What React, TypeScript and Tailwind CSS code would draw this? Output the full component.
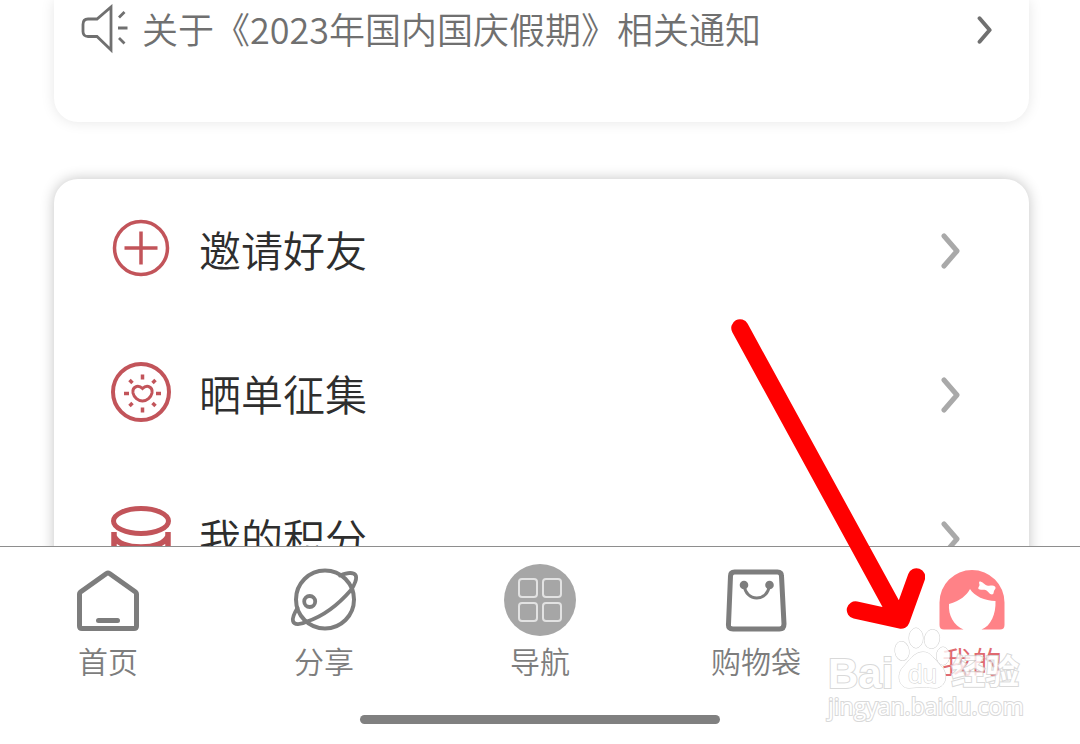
import type { ReactNode } from "react"
import { clsx } from "clsx"

interface MenuItem {
    id: string
    label: string
    icon: ReactNode
}

interface TabItem extends MenuItem {
    active?: boolean
}

const SpeakerIcon = () => (
    <svg
        viewBox="0 0 50 52"
        className="h-[52px] w-[50px] shrink-0"
        fill="none"
        stroke="currentColor"
        strokeWidth="2.8"
        aria-hidden="true"
    >
        <path d="M31 3v43L17 32.500H8c-3.500 0-5-2-5-5v-7c0-3.500 1.500-5.500 5-5.500h9L31 3z" />
        <path d="M39 13.500l5.500-5.500M38 24h9.500M39 34l5.500 5.500" />
    </svg>
)

const ChevronIcon = ({ className }: { className: string }) => (
    <svg
        viewBox="0 0 20 36"
        className={clsx("shrink-0", className)}
        fill="none"
        stroke="currentColor"
        strokeWidth="5"
        strokeLinecap="round"
        strokeLinejoin="round"
        aria-hidden="true"
    >
        <path d="M3 3l13 15L3 33" />
    </svg>
)

const MenuIcon = ({ children }: { children: ReactNode }) => (
    <svg
        viewBox="0 0 60 66"
        className="h-[66px] w-[60px] shrink-0 text-[#c2545a]"
        fill="none"
        stroke="currentColor"
        aria-hidden="true"
    >
        {children}
    </svg>
)

const TabIcon = ({ children }: { children: ReactNode }) => (
    <svg
        viewBox="0 0 72 72"
        className="size-[72px]"
        fill="none"
        stroke="currentColor"
        strokeLinecap="round"
        strokeLinejoin="round"
        aria-hidden="true"
    >
        {children}
    </svg>
)

const menuItems: MenuItem[] = [
    {
        id: "invite",
        label: "邀请好友",
        icon: (
            <MenuIcon>
                <circle cx="30" cy="30" r="26.500" strokeWidth="3.500" />
                <path d="M30 13.500v33M13.500 30h33" strokeWidth="3.500" />
            </MenuIcon>
        ),
    },
    {
        id: "share-order",
        label: "晒单征集",
        icon: (
            <MenuIcon>
                <circle cx="30" cy="30" r="28" strokeWidth="4" />
                <path
                    d="M31.500 26.500c-2-2-4-2.500-6-2-3 1-4 3.500-3.500 6.500 1 4.500 5 8 9.500 8s8.500-3.500 9.500-8c.5-3-.5-5.500-3.500-6.500-2-.5-4 0-6 2z"
                    strokeWidth="3"
                />
                <path
                    d="M31.500 12.500v5M31.500 45.500v5M13 31.500h5M45 31.500h5M18.500 18l3 3M44.500 18l-3 3M18.500 44l3-3M44.500 44l-3-3"
                    strokeWidth="3.500"
                />
            </MenuIcon>
        ),
    },
    {
        id: "points",
        label: "我的积分",
        icon: (
            <MenuIcon>
                <ellipse cx="30" cy="15" rx="27.500" ry="12.500" strokeWidth="5" />
                <path
                    d="M3 26v20M57 26v20M3 30c3 7.500 14 11 27 11s24-3.500 27-11M3 45c3 7.500 14 11 27 11s24-3.500 27-11"
                    strokeWidth="5.500"
                />
            </MenuIcon>
        ),
    },
]

const tabItems: TabItem[] = [
    {
        id: "home",
        label: "首页",
        icon: (
            <TabIcon>
                <path
                    d="M34.500 9.500q1.500-1 3 0L63.500 28q1 1 1 2v32q0 2.500-2.500 2.500H10q-2.500 0-2.500-2.500V30q0-1 1-2z"
                    strokeWidth="5"
                />
                <path d="M26.500 56.500h19" strokeWidth="5" />
            </TabIcon>
        ),
    },
    {
        id: "share",
        label: "分享",
        icon: (
            <TabIcon>
                <circle cx="37" cy="35.500" r="29" strokeWidth="4" />
                <circle cx="21.700" cy="37.500" r="5.500" strokeWidth="3.800" />
                <path
                    d="M52 11.500C58 9 65 8 67.500 11c2 3-1 10-4.500 15C50 41 36 52 19 57.500 12 61 6 61 5 57c-1-4 2-9 4.500-13"
                    strokeWidth="3.800"
                />
            </TabIcon>
        ),
    },
    {
        id: "guide",
        label: "导航",
        icon: (
            <TabIcon>
                <circle cx="36" cy="36" r="36" fill="#a6a6a6" stroke="none" />
                <g stroke="#e2e2e2" strokeWidth="2">
                    <rect x="15" y="15" width="18" height="18" rx="3" />
                    <rect x="39" y="15" width="18" height="18" rx="3" />
                    <rect x="15" y="39" width="18" height="18" rx="3" />
                    <rect x="39" y="39" width="18" height="18" rx="3" />
                </g>
            </TabIcon>
        ),
    },
    {
        id: "bag",
        label: "购物袋",
        icon: (
            <TabIcon>
                <path
                    d="M14.500 8h43q4 0 4 4l2.500 48q0 5-4.500 5H13q-5 0-4.500-5L10.500 12q0-4 4-4z"
                    strokeWidth="5"
                />
                <path d="M24 21c1 8 6 13 12.800 13S48.500 29 49.500 21" strokeWidth="3" />
                <g fill="currentColor" stroke="none">
                    <circle cx="24" cy="21" r="4.300" />
                    <circle cx="49.500" cy="21" r="4.300" />
                </g>
            </TabIcon>
        ),
    },
    {
        id: "mine",
        label: "我的",
        active: true,
        icon: (
            <TabIcon>
                <g stroke="none">
                    <path
                        d="M3.500 38.500a32.500 32.500 0 0 1 65 0V61q0 4.500-4.500 4.500H45.500C55 62 60 50 59.500 37 49 37 38 32 34 25c-3 6-10 12-21 15-1 11 5 22 14.500 25.500H8q-4.500 0-4.500-4.500z"
                        fill="#ff8287"
                    />
                    <path
                        d="M43.500 17.500c3 0 4 2.500 7.500 4 3 1 5.500-1 8 1 1.500 2-.5 3-1 4.500s0 3-2 3.500c-2.500 0-3.500-3-6.500-4.500-2.500-1-5 .5-7-1-1-1.500 1-2.500 1-4 0-1-1-2.500 0-3.500z"
                        fill="#fff"
                    />
                </g>
            </TabIcon>
        ),
    },
]

const NoticeCard = () => (
    <section className="rounded-b-[24px] bg-white pb-[62px] shadow-[0_0_14px_rgba(0,0,0,0.1)]">
        <a
            href="#notice"
            className="flex h-[60px] items-center gap-3 pr-[36px] pl-[26px] text-[#707070]"
        >
            <SpeakerIcon />
            <span className="flex-1 pb-1 text-[36px] leading-[56px] whitespace-nowrap">
                关于《2023年国内国庆假期》相关通知
            </span>
            <ChevronIcon className="h-[28px] w-[16px]" />
        </a>
    </section>
)

const MenuCard = () => (
    <section className="rounded-[24px] bg-white shadow-[0_0_14px_rgba(0,0,0,0.24)]">
        <ul>
            {menuItems.map(item => (
                <li key={item.id}>
                    <a
                        href={`#${item.id}`}
                        className="flex h-[144px] items-center gap-[28px] pr-[68px] pl-[57px]"
                    >
                        {item.icon}
                        <span className="flex-1 pb-1 text-[42px] leading-[60px] text-[#2e2e2e]">
                            {item.label}
                        </span>
                        <ChevronIcon className="h-[36px] w-[20px] text-[#a9a9a9]" />
                    </a>
                </li>
            ))}
        </ul>
    </section>
)

const TabBar = () => (
    <nav className="shrink-0 border-t border-[#8e8e8e] bg-white pt-[17px] pb-5">
        <div className="grid grid-cols-5">
            {tabItems.map(tab => (
                <button
                    key={tab.id}
                    type="button"
                    aria-current={tab.active ? "page" : undefined}
                    className={clsx(
                        "flex flex-col items-center gap-1 text-[30px] leading-[40px]",
                        tab.active ? "text-[#e06a70]" : "text-[#7d7d7d]"
                    )}
                >
                    {tab.icon}
                    <span>{tab.label}</span>
                </button>
            ))}
        </div>
        {/* system home indicator */}
        <div className="mx-auto mt-[35px] h-[9px] w-1/3 rounded-full bg-[#808080]" />
    </nav>
)

const PointerArrow = () => (
    <svg
        viewBox="0 0 194 312"
        className="pointer-events-none absolute right-[155px] bottom-[113px] h-[312px] w-[194px]"
        fill="none"
        stroke="#ff0000"
        strokeWidth="17.5"
        strokeLinecap="round"
        strokeLinejoin="round"
        aria-hidden="true"
    >
        <path d="M9 9l158 289M124.500 291L170 301l15.500-43" />
    </svg>
)

const Watermark = () => (
    <div className="pointer-events-none absolute right-[58px] bottom-[24px] flex w-[194px] flex-col text-white opacity-80 [-webkit-text-stroke:2px_#d0d0d0] [paint-order:stroke_fill]">
        <div className="flex items-end font-['Liberation_Sans','Noto_Sans_CJK_SC',sans-serif] font-bold">
            <span className="text-[42px] leading-[36px]">Bai</span>
            <svg
                viewBox="0 0 58 66"
                className="h-[66px] w-[58px] shrink-0"
                fill="#ffffff"
                stroke="#c4c4c4"
                aria-hidden="true"
            >
                <ellipse cx="9" cy="25" rx="7" ry="9.500" transform="rotate(-8 9 25)" />
                <ellipse cx="23" cy="12" rx="7" ry="10" />
                <ellipse cx="39" cy="13" rx="7.500" ry="9.500" transform="rotate(12 39 13)" />
                <ellipse cx="50" cy="30" rx="6.500" ry="9" />
                <path d="M30 26c8 0 12 8 18 14 8 8 5 21-5 22-5 0-8-1-13-1s-9 1-14 1C6 62 3 49 10 41c6-6 11-15 20-15z" />
                <text
                    x="15"
                    y="57"
                    className="font-['Liberation_Sans',sans-serif] text-[26px] font-normal"
                >
                    du
                </text>
            </svg>
            <span className="text-[34px] leading-[40px]">经验</span>
        </div>
        <span className="font-['Open_Sans',sans-serif] text-[23px] leading-[28px] font-medium">
            jingyan.baidu.com
        </span>
    </div>
)

const App = () => (
    <div className="relative flex h-screen flex-col overflow-hidden bg-white font-['Noto_Sans_CJK_SC',sans-serif] font-[350]">
        <main className="flex min-h-0 flex-1 flex-col gap-[57px] overflow-hidden pr-[51px] pl-[54px]">
            <NoticeCard />
            <MenuCard />
        </main>
        <TabBar />
        <PointerArrow />
        <Watermark />
    </div>
)

export default App
